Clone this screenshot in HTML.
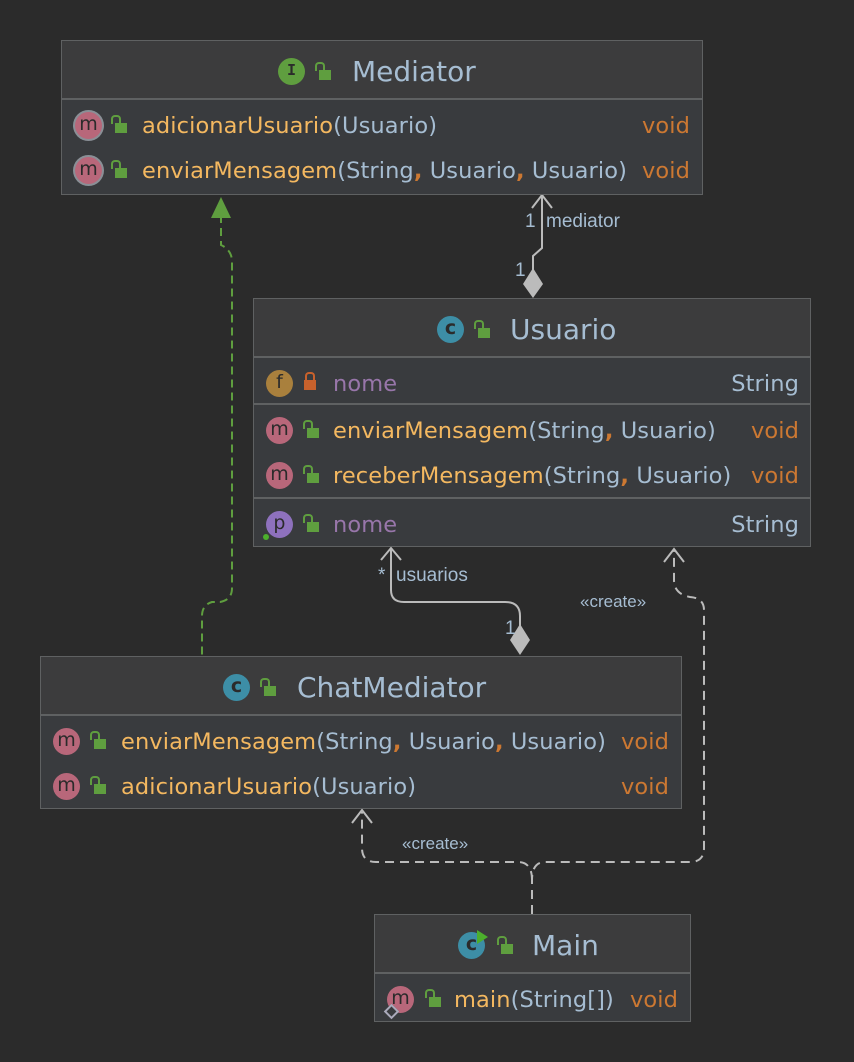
<!DOCTYPE html>
<html><head><meta charset="utf-8"><style>
body{margin:0;width:854px;height:1062px;background:#2b2b2b;position:relative;overflow:hidden;font-family:"DejaVu Sans","Liberation Sans",sans-serif;}
.box{position:absolute;border:1px solid #5f6162;background:#393b3e;box-sizing:border-box}
.hd{background:#3c3c3d;border-bottom:2px solid #5f6162;position:relative;box-sizing:border-box}
.title{position:absolute;top:0;color:#a6bdd2;font-size:28px;white-space:nowrap}
.row{position:absolute;left:0;right:0;height:44px;font-size:22.5px;white-space:nowrap;letter-spacing:0.1px}
.row span{position:absolute;top:9px}
.ic{position:absolute;width:27px;height:27px;border-radius:50%;color:#2b2b2b;font-size:19px;text-align:center;line-height:25px}
.lk{position:absolute;width:12px;height:10px;background:#5f9e3f}
.lk:before{content:"";position:absolute;left:-4px;top:-8px;width:6px;height:7px;border:2px solid #5f9e3f;border-bottom:none;border-radius:4px 4px 0 0}
.lk.cl{background:#c8612c}
.lk.cl:before{left:1px;border-color:#c8612c;width:6px}
.nm{color:#f4b860}.pm{color:#a6bdd2;font-weight:normal}.cm{color:#cc7832}.vd{color:#cc7832}.fl{color:#9876aa}.ty{color:#a6bdd2}
.div{position:absolute;left:0;right:0;height:2px;background:#5f6162}
.lbl{position:absolute;color:#a6bdd2;font-size:19px;font-family:"Liberation Sans",sans-serif}
</style></head><body>
<svg width="854" height="1062" style="position:absolute;left:0;top:0">
<g fill="none" stroke="#5f9e3f" stroke-width="2" stroke-dasharray="8,5">
<path d="M221 215 V245 Q232 250 232 262 V588 Q232 600 220 602 H212 Q202 605 202 616 V656"/>
</g>
<path d="M211 218 L221 197 L231 218 Z" fill="#5f9e3f"/>
<g fill="none" stroke="#bbbbbb" stroke-width="2">
<path d="M542 196 V248 L533 256 V272"/>
<path d="M532 208 L542 195 L552 208"/>
<path d="M391 548 V590 Q391 602 404 602 H505 Q520 602 520 616 V628"/>
<path d="M381 560 L391 548 L401 560"/>
</g>
<path d="M533 268 L543 284 L533 298 L523 284 Z" fill="#bbbbbb"/>
<path d="M520 624 L530 640 L520 655 L510 640 Z" fill="#bbbbbb"/>
<g fill="none" stroke="#bbbbbb" stroke-width="2" stroke-dasharray="9,6">
<path d="M532 914 V880 Q532 862 545 862 H690 Q704 862 704 848 V610 Q704 598 690 597 Q674 594 674 580 V550"/>
<path d="M532 880 Q532 862 518 862 H376 Q362 862 362 848 V812"/>
</g>
<path d="M664 562 L674 549 L684 562 M352 823 L362 810 L372 823" fill="none" stroke="#bbbbbb" stroke-width="2"/>
</svg>
<div class="lbl" style="left:525px;top:211px">1</div>
<div class="lbl" style="left:546px;top:211px">mediator</div>
<div class="lbl" style="left:515px;top:260px">1</div>
<div class="lbl" style="left:378px;top:565px">*</div>
<div class="lbl" style="left:396px;top:565px">usuarios</div>
<div class="lbl" style="left:505px;top:618px">1</div>
<div class="lbl" style="left:580px;top:592px;font-size:17px">«create»</div>
<div class="lbl" style="left:402px;top:834px;font-size:17px">«create»</div>

<!-- Mediator -->
<div class="box" style="left:61px;top:40px;width:642px;height:155px">
 <div class="hd" style="height:59px"><div class="ic" style="left:216px;top:17px;background:#5f9e3f;font-size:15px;font-family:'DejaVu Sans Mono',monospace;font-weight:bold">I</div><div class="lk" style="left:257px;top:29px"></div><div class="title" style="left:290px;top:14px">Mediator</div></div>
 <div class="row" style="top:63px"><div class="ic" style="left:13px;top:8px;background:#b8677a;box-shadow:0 0 0 2px #8a8f96">m</div><div class="lk" style="left:53px;top:19px"></div><span class="nm" style="left:80px">adicionarUsuario<b class="pm">(Usuario)</b></span><span class="vd" style="right:12px">void</span></div>
 <div class="row" style="top:108px"><div class="ic" style="left:13px;top:8px;background:#b8677a;box-shadow:0 0 0 2px #8a8f96">m</div><div class="lk" style="left:53px;top:19px"></div><span class="nm" style="left:80px">enviarMensagem<b class="pm">(String<b class="cm">,</b> Usuario<b class="cm">,</b> Usuario)</b></span><span class="vd" style="right:12px">void</span></div>
</div>

<!-- Usuario -->
<div class="box" style="left:253px;top:298px;width:558px;height:249px">
 <div class="hd" style="height:59px"><div class="ic" style="left:183px;top:17px;background:#3d8ea6;font-weight:bold">c</div><div class="lk" style="left:224px;top:29px"></div><div class="title" style="left:256px;top:14px">Usuario</div></div>
 <div class="row" style="top:63px"><div class="ic" style="left:12px;top:8px;background:#a9803d">f</div><div class="lk cl" style="left:50px;top:18px"></div><span class="fl" style="left:79px">nome</span><span class="ty" style="right:11px">String</span></div>
 <div class="div" style="top:104px"></div>
 <div class="row" style="top:110px"><div class="ic" style="left:12px;top:8px;background:#b8677a">m</div><div class="lk" style="left:53px;top:19px"></div><span class="nm" style="left:79px">enviarMensagem<b class="pm">(String<b class="cm">,</b> Usuario)</b></span><span class="vd" style="right:11px">void</span></div>
 <div class="row" style="top:155px"><div class="ic" style="left:12px;top:8px;background:#b8677a">m</div><div class="lk" style="left:53px;top:19px"></div><span class="nm" style="left:79px">receberMensagem<b class="pm">(String<b class="cm">,</b> Usuario)</b></span><span class="vd" style="right:11px">void</span></div>
 <div class="div" style="top:198px"></div>
 <div class="row" style="top:204px"><div class="ic" style="left:12px;top:8px;background:#8e71bd">p</div><div style="position:absolute;left:9px;top:31px;width:6px;height:6px;border-radius:50%;background:#4caf2c"></div><div class="lk" style="left:53px;top:19px"></div><span class="fl" style="left:79px">nome</span><span class="ty" style="right:11px">String</span></div>
</div>

<!-- ChatMediator -->
<div class="box" style="left:40px;top:656px;width:642px;height:153px">
 <div class="hd" style="height:59px"><div class="ic" style="left:182px;top:17px;background:#3d8ea6;font-weight:bold">c</div><div class="lk" style="left:223px;top:29px"></div><div class="title" style="left:256px;top:14px">ChatMediator</div></div>
 <div class="row" style="top:63px"><div class="ic" style="left:12px;top:8px;background:#b8677a">m</div><div class="lk" style="left:53px;top:19px"></div><span class="nm" style="left:80px">enviarMensagem<b class="pm">(String<b class="cm">,</b> Usuario<b class="cm">,</b> Usuario)</b></span><span class="vd" style="right:12px">void</span></div>
 <div class="row" style="top:108px"><div class="ic" style="left:12px;top:8px;background:#b8677a">m</div><div class="lk" style="left:53px;top:19px"></div><span class="nm" style="left:80px">adicionarUsuario<b class="pm">(Usuario)</b></span><span class="vd" style="right:12px">void</span></div>
</div>

<!-- Main -->
<div class="box" style="left:374px;top:914px;width:317px;height:108px">
 <div class="hd" style="height:59px"><div class="ic" style="left:83px;top:17px;background:#3d8ea6;font-weight:bold">c</div><svg style="position:absolute;left:102px;top:15px" width="12" height="14"><path d="M0 0 L11 7 L0 14Z" fill="#4caf2c"/></svg><div class="lk" style="left:126px;top:29px"></div><div class="title" style="left:157px;top:14px">Main</div></div>
 <div class="row" style="top:63px"><div class="ic" style="left:12px;top:8px;background:#b8677a">m</div><div style="position:absolute;left:11px;top:28px;width:7px;height:7px;border:2px solid #aab;transform:rotate(45deg);background:#393b3e"></div><div class="lk" style="left:54px;top:19px"></div><span class="nm" style="left:79px">main<b class="pm">(String[])</b></span><span class="vd" style="right:12px">void</span></div>
</div>
</body></html>
